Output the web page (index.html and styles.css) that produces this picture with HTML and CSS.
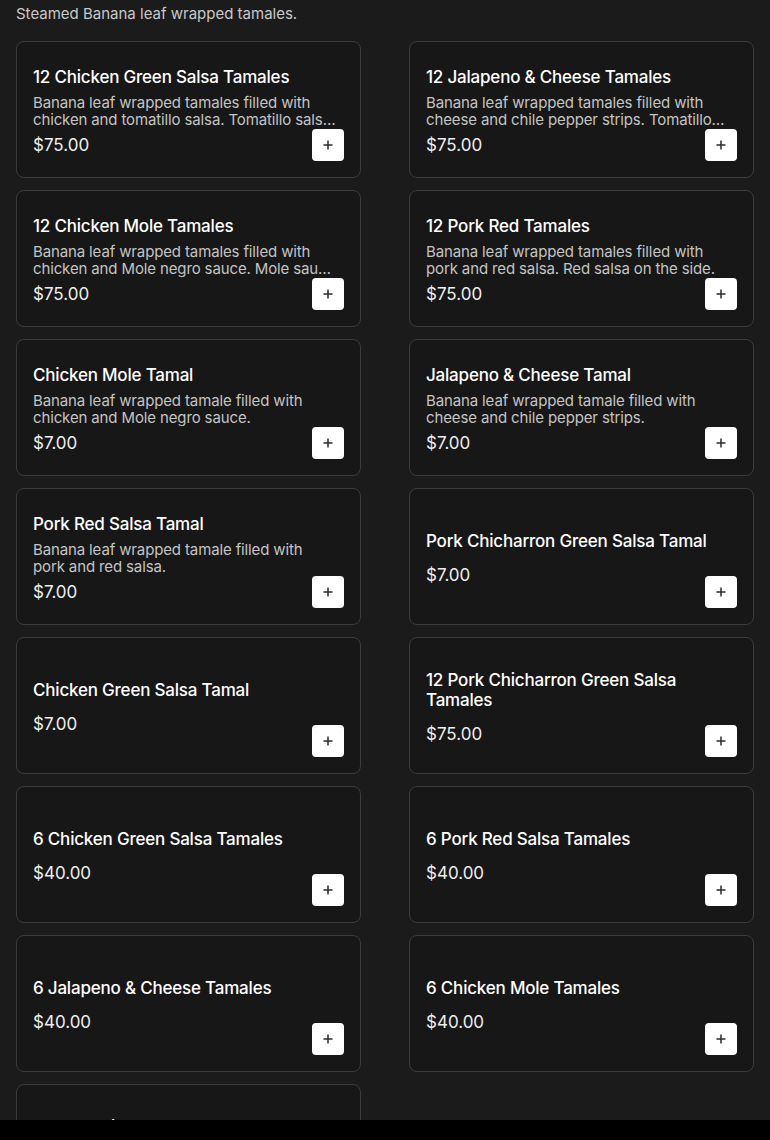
FILE: index.html
```html
<!DOCTYPE html>
<html lang="en">
<head>
    <meta charset="UTF-8">
    <meta name="viewport" content="width=device-width, initial-scale=1.0">
    <title>Tamales</title>
    <link rel="stylesheet" href="styles.css">
</head>
<body>
    <p class="section-desc">Steamed Banana leaf wrapped tamales.</p>

    <div class="menu-grid">
        <div class="item-card">
            <div class="item-info">
                <h3 class="item-name">12 Chicken Green Salsa Tamales</h3>
                <p class="item-desc">Banana leaf wrapped tamales filled with chicken and tomatillo salsa. Tomatillo salsa on the side.</p>
                <span class="item-price">$75.00</span>
            </div>
            <button class="add-btn"><svg viewBox="0 0 10 10"><path d="M5 0.5v9M0.5 5h9"/></svg></button>
        </div>
        <div class="item-card">
            <div class="item-info">
                <h3 class="item-name">12 Jalapeno &amp; Cheese Tamales</h3>
                <p class="item-desc">Banana leaf wrapped tamales filled with cheese and chile pepper strips. Tomatillo salsa on the side.</p>
                <span class="item-price">$75.00</span>
            </div>
            <button class="add-btn"><svg viewBox="0 0 10 10"><path d="M5 0.5v9M0.5 5h9"/></svg></button>
        </div>
        <div class="item-card">
            <div class="item-info">
                <h3 class="item-name">12 Chicken Mole Tamales</h3>
                <p class="item-desc">Banana leaf wrapped tamales filled with chicken and Mole negro sauce. Mole sauce on the side.</p>
                <span class="item-price">$75.00</span>
            </div>
            <button class="add-btn"><svg viewBox="0 0 10 10"><path d="M5 0.5v9M0.5 5h9"/></svg></button>
        </div>
        <div class="item-card">
            <div class="item-info">
                <h3 class="item-name">12 Pork Red Tamales</h3>
                <p class="item-desc">Banana leaf wrapped tamales filled with pork and red salsa. Red salsa on the side.</p>
                <span class="item-price">$75.00</span>
            </div>
            <button class="add-btn"><svg viewBox="0 0 10 10"><path d="M5 0.5v9M0.5 5h9"/></svg></button>
        </div>
        <div class="item-card">
            <div class="item-info">
                <h3 class="item-name">Chicken Mole Tamal</h3>
                <p class="item-desc">Banana leaf wrapped tamale filled with chicken and Mole negro sauce.</p>
                <span class="item-price">$7.00</span>
            </div>
            <button class="add-btn"><svg viewBox="0 0 10 10"><path d="M5 0.5v9M0.5 5h9"/></svg></button>
        </div>
        <div class="item-card">
            <div class="item-info">
                <h3 class="item-name">Jalapeno &amp; Cheese Tamal</h3>
                <p class="item-desc">Banana leaf wrapped tamale filled with cheese and chile pepper strips.</p>
                <span class="item-price">$7.00</span>
            </div>
            <button class="add-btn"><svg viewBox="0 0 10 10"><path d="M5 0.5v9M0.5 5h9"/></svg></button>
        </div>
        <div class="item-card">
            <div class="item-info">
                <h3 class="item-name">Pork Red Salsa Tamal</h3>
                <p class="item-desc">Banana leaf wrapped tamale filled with pork and red salsa.</p>
                <span class="item-price">$7.00</span>
            </div>
            <button class="add-btn"><svg viewBox="0 0 10 10"><path d="M5 0.5v9M0.5 5h9"/></svg></button>
        </div>
        <div class="item-card">
            <div class="item-info">
                <h3 class="item-name">Pork Chicharron Green Salsa Tamal</h3>
                <p class="item-desc"></p>
                <span class="item-price">$7.00</span>
            </div>
            <button class="add-btn"><svg viewBox="0 0 10 10"><path d="M5 0.5v9M0.5 5h9"/></svg></button>
        </div>
        <div class="item-card">
            <div class="item-info">
                <h3 class="item-name">Chicken Green Salsa Tamal</h3>
                <p class="item-desc"></p>
                <span class="item-price">$7.00</span>
            </div>
            <button class="add-btn"><svg viewBox="0 0 10 10"><path d="M5 0.5v9M0.5 5h9"/></svg></button>
        </div>
        <div class="item-card">
            <div class="item-info">
                <h3 class="item-name">12 Pork Chicharron Green Salsa Tamales</h3>
                <p class="item-desc"></p>
                <span class="item-price">$75.00</span>
            </div>
            <button class="add-btn"><svg viewBox="0 0 10 10"><path d="M5 0.5v9M0.5 5h9"/></svg></button>
        </div>
        <div class="item-card">
            <div class="item-info">
                <h3 class="item-name">6 Chicken Green Salsa Tamales</h3>
                <p class="item-desc"></p>
                <span class="item-price">$40.00</span>
            </div>
            <button class="add-btn"><svg viewBox="0 0 10 10"><path d="M5 0.5v9M0.5 5h9"/></svg></button>
        </div>
        <div class="item-card">
            <div class="item-info">
                <h3 class="item-name">6 Pork Red Salsa Tamales</h3>
                <p class="item-desc"></p>
                <span class="item-price">$40.00</span>
            </div>
            <button class="add-btn"><svg viewBox="0 0 10 10"><path d="M5 0.5v9M0.5 5h9"/></svg></button>
        </div>
        <div class="item-card">
            <div class="item-info">
                <h3 class="item-name">6 Jalapeno &amp; Cheese Tamales</h3>
                <p class="item-desc"></p>
                <span class="item-price">$40.00</span>
            </div>
            <button class="add-btn"><svg viewBox="0 0 10 10"><path d="M5 0.5v9M0.5 5h9"/></svg></button>
        </div>
        <div class="item-card">
            <div class="item-info">
                <h3 class="item-name">6 Chicken Mole Tamales</h3>
                <p class="item-desc"></p>
                <span class="item-price">$40.00</span>
            </div>
            <button class="add-btn"><svg viewBox="0 0 10 10"><path d="M5 0.5v9M0.5 5h9"/></svg></button>
        </div>
        <div class="item-card">
            <div class="item-info">
                <h3 class="item-name">6 Pork Chicharron Green Salsa Tamales</h3>
                <p class="item-desc"></p>
                <span class="item-price">$40.00</span>
            </div>
            <button class="add-btn"><svg viewBox="0 0 10 10"><path d="M5 0.5v9M0.5 5h9"/></svg></button>
        </div>
    </div>

    <div class="bottom-bar"></div>
</body>
</html>
```

FILE: styles.css
```css
body {
    font-family: Inter, "Open Sans", sans-serif;
    background-color: #1b1b1b;
    color: #fff;
    margin: 0;
    padding: 5px 16px 0;
}
.section-desc {
    margin: 0 0 18px;
    font-size: 15px;
    line-height: 18px;
    color: #c9c9c9;
}
.menu-grid {
    display: grid;
    grid-template-columns: 1fr 1fr;
    column-gap: 48px;
    row-gap: 12px;
}
.item-card {
    display: grid;
    min-height: 103px;
    padding: 16px;
    background-color: #171717;
    border: 1px solid #3c3c3c;
    border-radius: 8px;
}
.item-info,
.add-btn {
    grid-area: 1 / 1;
}
.item-info {
    align-self: center;
    display: flex;
    flex-direction: column;
    padding-top: 2px;
}
.item-name {
    margin: 0;
    font-size: 17px;
    font-weight: 500;
    line-height: 20px;
    letter-spacing: -0.2px;
}
.item-desc {
    margin: 7px 0;
    padding-right: 8px;
    font-size: 15px;
    line-height: 17px;
    letter-spacing: -0.13px;
    color: #c4c4c4;
    display: -webkit-box;
    -webkit-line-clamp: 2;
    -webkit-box-orient: vertical;
    overflow: hidden;
}
.item-price {
    font-size: 17px;
    line-height: 20px;
    color: #eee;
}
.add-btn {
    align-self: end;
    justify-self: end;
    display: flex;
    align-items: center;
    justify-content: center;
    width: 32px;
    height: 32px;
    padding: 0;
    border: none;
    border-radius: 4px;
    background-color: #fff;
    cursor: pointer;
}
.add-btn svg {
    width: 10px;
    height: 10px;
    fill: none;
    stroke: #2a2a2a;
    stroke-width: 1.5;
}
.bottom-bar {
    position: fixed;
    left: 0;
    right: 0;
    bottom: 0;
    height: 20px;
    background-color: #000;
}
```
